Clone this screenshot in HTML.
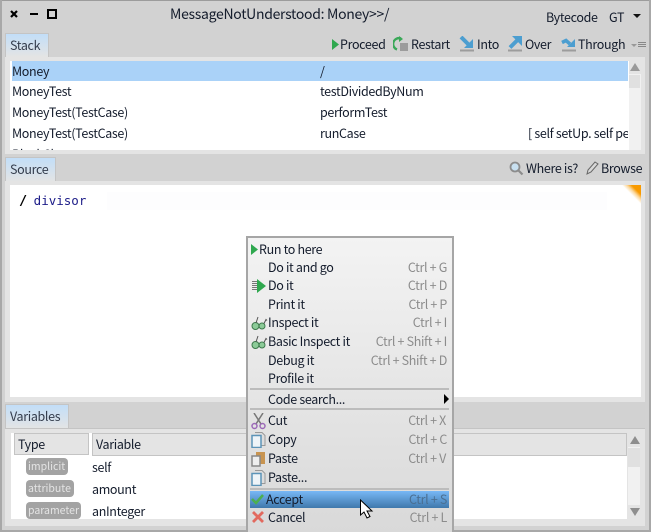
<!DOCTYPE html>
<html><head><meta charset="utf-8"><style>
html,body{margin:0;padding:0}
body{width:651px;height:532px;overflow:hidden;position:relative;background:#d2d2d2;font-family:"Noto Sans CJK JP","Liberation Sans",sans-serif;font-size:12.5px;letter-spacing:-.34px;color:#141c2c}
div,svg{position:absolute}
.t{white-space:nowrap;line-height:18px;height:18px}
.s{color:#8c8c8c;text-align:right;right:auto;width:150px}
.tab{background:linear-gradient(#c2def8,#e4e4e4);border:1px solid #c4c4c4;border-bottom:0;box-sizing:border-box}
.pan{background:#e4e4e4}
.w{background:#fff}
.tag{background:#a3a3a3;color:#e4e4e4;border-radius:4px;font-size:10.5px;letter-spacing:0;line-height:17px;height:17px;padding-left:2px;box-sizing:border-box;white-space:nowrap;overflow:hidden}
</style></head><body>
<div style="left:0;top:0;width:651px;height:1px;background:#9c9c9c"></div>
<div style="left:0;top:0;width:2px;height:532px;background:#a8a8a8"></div>
<div style="left:649px;top:0;width:2px;height:532px;background:#a8a8a8"></div>
<div style="left:0;top:530px;width:651px;height:2px;background:#a8a8a8"></div>

<svg style="left:9px;top:8px" width="50" height="14" viewBox="0 0 50 14"><path d="M2 3l6 6M8 3l-6 6" stroke="#000" stroke-width="2.2"/><path d="M21 6h8" stroke="#000" stroke-width="2"/><rect x="39" y="2" width="8" height="8" fill="none" stroke="#000" stroke-width="2"/></svg>
<div class="t" style="left:170px;top:5px;font-size:14px;line-height:18px;letter-spacing:-.3px">MessageNotUnderstood: Money&gt;&gt;/</div>
<div class="t" style="left:546px;top:8px">Bytecode</div>
<div class="t" style="left:609px;top:8px">GT</div>
<svg style="left:633px;top:14px" width="10" height="6"><path d="M0 0h8l-4 4z" fill="#111"/></svg>

<div class="tab" style="left:5px;top:33px;width:44px;height:24px"></div>
<div class="t" style="left:10px;top:36px;color:#333c4c">Stack</div>
<svg style="left:331px;top:39px" width="10" height="12"><path d="M1 0l7 5.500-7 5.500z" fill="#2fa84f"/></svg>
<div class="t" style="left:340px;top:35px">Proceed</div>
<svg style="left:393px;top:36px" width="16" height="16"><path d="M8 2.500A5 5 0 0 0 4 13.500" fill="none" stroke="#3aa858" stroke-width="2.400"/><path d="M6 0v6l4-3z" fill="#3aa858"/><rect x="7" y="7" width="8" height="8" fill="#9c9c9c"/></svg>
<div class="t" style="left:411px;top:35px">Restart</div>
<svg style="left:459px;top:36px" width="16" height="16"><path d="M2 1l7.500 7.500" stroke="#4c9ed0" stroke-width="4"/><path d="M14 3v9H5z" fill="#4c9ed0"/><path d="M1 14.500h14" stroke="#9c9c9c" stroke-width="2"/></svg>
<div class="t" style="left:477px;top:35px">Into</div>
<svg style="left:507px;top:36px" width="16" height="16"><path d="M3 11.500L10 4.500" stroke="#4c9ed0" stroke-width="4"/><path d="M5 0h10v10z" fill="#4c9ed0"/><path d="M1 14.500h14" stroke="#9c9c9c" stroke-width="2"/></svg>
<div class="t" style="left:525px;top:35px">Over</div>
<svg style="left:561px;top:36px" width="16" height="16"><path d="M1 6.500l4-2 4 3.500" fill="none" stroke="#4c9ed0" stroke-width="3.500"/><path d="M14 3v8H6z" fill="#4c9ed0"/><path d="M1 14.500h14" stroke="#9c9c9c" stroke-width="2"/></svg>
<div class="t" style="left:578px;top:35px">Through</div>
<svg style="left:630px;top:40px" width="16" height="10"><path d="M1 4h6l-3 3z" fill="#999"/><path d="M8 2.500h8M8 4.500h8M8 6.500h8" stroke="#888" stroke-width="1"/></svg>

<div class="pan" style="left:5px;top:57px;width:640px;height:97px"></div>
<div class="w" style="left:10px;top:61px;width:619px;height:89px;overflow:hidden">
 <div style="left:2px;top:0;width:616px;height:20px;background:#aad2f8"></div>
 <div class="t" style="left:2px;top:1px">Money</div><div class="t" style="left:310px;top:1px">/</div>
 <div class="t" style="left:2px;top:21px">MoneyTest</div><div class="t" style="left:310px;top:21px">testDividedByNum</div>
 <div class="t" style="left:2px;top:42px">MoneyTest(TestCase)</div><div class="t" style="left:310px;top:42px">performTest</div>
 <div class="t" style="left:2px;top:63px">MoneyTest(TestCase)</div><div class="t" style="left:310px;top:63px">runCase</div>
 <div class="t" style="left:518px;top:63px;width:100px;overflow:hidden">[ self setUp. self perform</div>
 <div class="t" style="left:2px;top:84px">BlockClosure</div>
</div>
<div style="left:629px;top:74px;width:12px;height:76px;background:#f1f1f1"></div>
<div style="left:629px;top:75px;width:11px;height:13px;background:#e0e0e0"></div>
<svg style="left:629px;top:63px" width="12" height="10"><path d="M6 0l5 8H1z" fill="#9a9a9a"/></svg>

<div class="tab" style="left:5px;top:157px;width:51px;height:25px"></div>
<div class="t" style="left:10px;top:160px;color:#333c4c">Source</div>
<svg style="left:509px;top:161px" width="15" height="15"><circle cx="6" cy="6" r="4.500" fill="#c8e0f0" stroke="#8c8c8c" stroke-width="1.800"/><path d="M9.500 9.500l4 4" stroke="#8c8c8c" stroke-width="2.200"/></svg>
<div class="t" style="left:526px;top:159px">Where is?</div>
<svg style="left:586px;top:161px" width="13" height="15"><path d="M1 13l1-4 7-8 3 2-7 8z" fill="#d8d8d8" stroke="#666" stroke-width="1"/></svg>
<div class="t" style="left:601px;top:159px">Browse</div>
<div class="pan" style="left:5px;top:181px;width:640px;height:221px"></div>
<div class="w" style="left:10px;top:185px;width:631px;height:212px"></div>
<div style="left:107px;top:192px;width:500px;height:18px;background:#fdfdfe"></div>
<div style="left:621px;top:185px;width:20px;height:20px;background:linear-gradient(to top right,#fff 52%,#fcd9a0 64%,#f89a00 76%)"></div>
<div class="t" style="left:19px;top:192px;letter-spacing:0;font-family:'DejaVu Sans Mono','Liberation Mono',monospace;font-size:12.500px;color:#1c1c88"><span style="color:#000;font-weight:bold;font-size:13.500px;margin-right:-1px">/</span> divisor</div>

<div class="tab" style="left:5px;top:404px;width:64px;height:25px"></div>
<div class="t" style="left:10px;top:407px;color:#333c4c">Variables</div>
<div class="pan" style="left:5px;top:428px;width:640px;height:98px;border-top:1px solid #c4c4c4;box-sizing:border-box"></div>
<div class="w" style="left:11px;top:433px;width:616px;height:86px"></div>
<div style="left:14px;top:433px;width:75px;height:22px;background:#e4e4e4;border:1px solid #c4c4c4;box-sizing:border-box"></div>
<div style="left:92px;top:433px;width:535px;height:23px;background:#e4e4e4;border:1px solid #c4c4c4;box-sizing:border-box"></div>
<div class="t" style="left:18px;top:435px">Type</div>
<div class="t" style="left:96px;top:435px">Variable</div>
<div class="tag" style="left:26px;top:458px;width:42px">implicit</div>
<div class="tag" style="left:26px;top:480px;width:48px">attribute</div>
<div class="tag" style="left:26px;top:502px;width:55px">parameter</div>
<div class="t" style="left:92px;top:458px">self</div>
<div class="t" style="left:92px;top:480px">amount</div>
<div class="t" style="left:92px;top:502px">anInteger</div>
<div style="left:628px;top:447px;width:12px;height:58px;background:#f1f1f1"></div>
<div style="left:628px;top:448px;width:12px;height:19px;background:#e0e0e0"></div>
<svg style="left:629px;top:436px" width="12" height="10"><path d="M6 0l5 8H1z" fill="#8e8e8e"/></svg>
<svg style="left:629px;top:508px" width="12" height="10"><path d="M1 0h10l-5 8z" fill="#8e8e8e"/></svg>

<!-- menu -->
<div style="left:246px;top:236px;width:208px;height:296px;box-sizing:border-box;border:2px solid #a6a6a6;border-bottom:0;background:linear-gradient(#f3f3f3,#d9d9d9)"></div>
<div style="left:250px;top:388px;width:199px;height:2px;background:#bcbcbc"></div>
<div style="left:250px;top:408px;width:199px;height:2px;background:#bcbcbc"></div>
<div style="left:250px;top:488px;width:199px;height:2px;background:#bcbcbc"></div>
<div style="left:250px;top:491px;width:199px;height:17px;background:linear-gradient(#78b8f6,#3f78ac)"></div>

<svg style="left:251px;top:244px" width="8" height="12"><path d="M0 0l7 5.500-7 5.500z" fill="#2fa84f"/></svg>
<div class="t" style="left:259px;top:240px">Run to here</div>
<div class="t" style="left:268px;top:258px">Do it and go</div>
<div class="t" style="left:268px;top:276px">Do it</div>
<div class="t" style="left:268px;top:295px">Print it</div>
<div class="t" style="left:268px;top:313px">Inspect it</div>
<div class="t" style="left:268px;top:332px">Basic Inspect it</div>
<div class="t" style="left:268px;top:351px">Debug it</div>
<div class="t" style="left:268px;top:369px">Profile it</div>
<div class="t" style="left:268px;top:390px">Code search...</div>
<div class="t" style="left:268px;top:411px">Cut</div>
<div class="t" style="left:268px;top:430px">Copy</div>
<div class="t" style="left:268px;top:449px">Paste</div>
<div class="t" style="left:268px;top:468px">Paste...</div>
<div class="t" style="left:266px;top:490px">Accept</div>
<div class="t" style="left:268px;top:508px">Cancel</div>

<div class="t s" style="left:297px;top:258px">Ctrl + G</div>
<div class="t s" style="left:297px;top:276px">Ctrl + D</div>
<div class="t s" style="left:297px;top:295px">Ctrl + P</div>
<div class="t s" style="left:297px;top:313px">Ctrl + I</div>
<div class="t s" style="left:297px;top:332px">Ctrl + Shift + I</div>
<div class="t s" style="left:297px;top:351px">Ctrl + Shift + D</div>
<div class="t s" style="left:296px;top:411px">Ctrl + X</div>
<div class="t s" style="left:297px;top:430px">Ctrl + C</div>
<div class="t s" style="left:296px;top:449px">Ctrl + V</div>
<div class="t s" style="left:297px;top:490px;color:#4a6f92">Ctrl + S</div>
<div class="t s" style="left:297px;top:508px">Ctrl + L</div>

<svg style="left:444px;top:394px" width="6" height="11"><path d="M0 0l5 5-5 5z" fill="#000"/></svg>
<svg style="left:252px;top:279px" width="15" height="14"><path d="M0 2.500h5M0 4.500h5M0 6.500h5M0 8.500h5M0 10.500h5" stroke="#777" stroke-width="1"/><path d="M5 0l9 7-9 7z" fill="#2fa84f"/></svg>
<svg style="left:251px;top:316px" width="17" height="15"><circle cx="4.500" cy="10" r="3.500" fill="#8ccb98" stroke="#3d7a4d"/><circle cx="11" cy="10" r="3" fill="#8ccb98" stroke="#3d7a4d"/><path d="M5 7l2-6M13 7.500l2-4 1 1" fill="none" stroke="#555"/></svg>
<svg style="left:251px;top:335px" width="17" height="15"><circle cx="4.500" cy="10" r="3.500" fill="#8ccb98" stroke="#3d7a4d"/><circle cx="11" cy="10" r="3" fill="#8ccb98" stroke="#3d7a4d"/><path d="M5 7l2-6M13 7.500l2-4 1 1" fill="none" stroke="#555"/></svg>
<svg style="left:251px;top:413px" width="15" height="17"><path d="M3 0l7 11M12 0L5 11" stroke="#777" stroke-width="1.500"/><circle cx="3.500" cy="13" r="2.500" fill="none" stroke="#9c6ab8" stroke-width="1.500"/><circle cx="11.500" cy="13" r="2.500" fill="none" stroke="#9c6ab8" stroke-width="1.500"/></svg>
<svg style="left:251px;top:432px" width="15" height="16"><path d="M4 .5h7l3 3v10H9" fill="#ddd" stroke="#999"/><rect x="1" y="3.500" width="9" height="12" fill="#eef4f8" stroke="#5c94b8" stroke-width="1.500"/></svg>
<svg style="left:251px;top:451px" width="15" height="16"><rect x="5" y="1" width="9" height="12" fill="#c89450"/><rect x="1" y="5" width="8" height="10" fill="#eee" stroke="#888" stroke-width="1.500"/></svg>
<svg style="left:251px;top:470px" width="15" height="16"><path d="M4 .5h7l3 3v10H9" fill="#ddd" stroke="#999"/><rect x="1" y="3.500" width="9" height="12" fill="#eef4f8" stroke="#5c94b8" stroke-width="1.500"/></svg>
<svg style="left:251px;top:493px" width="14" height="12"><path d="M1 6l4 4 7-8" fill="none" stroke="#4caf50" stroke-width="2.500"/></svg>
<svg style="left:251px;top:511px" width="14" height="13"><path d="M2 1l10 10M12 1L2 11" stroke="#e2695e" stroke-width="2.800"/></svg>
<svg style="left:359px;top:499px" width="15" height="22"><path d="M1.500 1v15l3.500-3 3 6 3-1.500-3-5.500h5z" fill="#fff" stroke="#000" stroke-width="1"/></svg>
</body></html>
